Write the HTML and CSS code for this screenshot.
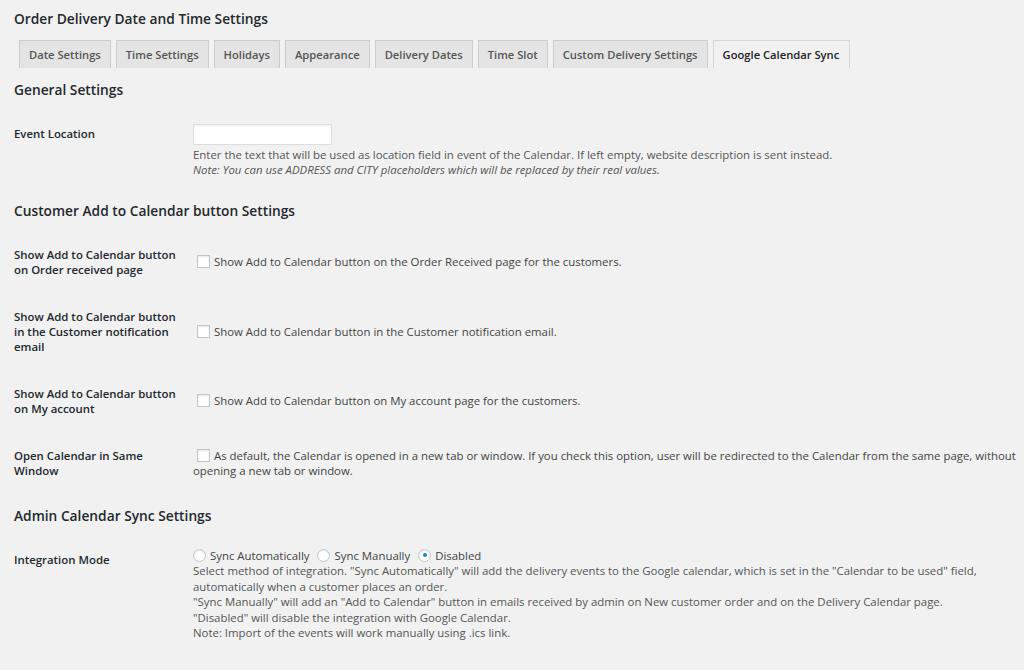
FILE: index.html
```html
<!DOCTYPE html>
<html>
<head>
<meta charset="utf-8">
<link rel="stylesheet" href="styles.css">
</head>
<body>
<h1 class="page-title">Order Delivery Date and Time Settings</h1>
<nav class="tabs">
  <a class="tab">Date Settings</a>
  <a class="tab">Time Settings</a>
  <a class="tab">Holidays</a>
  <a class="tab">Appearance</a>
  <a class="tab">Delivery Dates</a>
  <a class="tab">Time Slot</a>
  <a class="tab">Custom Delivery Settings</a>
  <a class="tab tab-active">Google Calendar Sync</a>
</nav>

<h2 class="section-title section-first">General Settings</h2>
<table class="form-table">
  <tr>
    <th>Event Location</th>
    <td>
      <input type="text" class="text-input">
      <p class="desc">Enter the text that will be used as location field in event of the Calendar. If left empty, website description is sent instead.<br><i>Note: You can use ADDRESS and CITY placeholders which will be replaced by their real values.</i></p>
    </td>
  </tr>
</table>

<h2 class="section-title">Customer Add to Calendar button Settings</h2>
<table class="form-table">
  <tr>
    <th>Show Add to Calendar button on Order received page</th>
    <td><label><input type="checkbox" class="check">Show Add to Calendar button on the Order Received page for the customers.</label></td>
  </tr>
  <tr>
    <th>Show Add to Calendar button in the Customer notification email</th>
    <td><label><input type="checkbox" class="check">Show Add to Calendar button in the Customer notification email.</label></td>
  </tr>
  <tr>
    <th>Show Add to Calendar button on My account</th>
    <td><label><input type="checkbox" class="check">Show Add to Calendar button on My account page for the customers.</label></td>
  </tr>
  <tr>
    <th>Open Calendar in Same Window</th>
    <td><label><input type="checkbox" class="check">As default, the Calendar is opened in a new tab or window. If you check this option, user will be redirected to the Calendar from the same page, without opening a new tab or window.</label></td>
  </tr>
</table>

<h2 class="section-title">Admin Calendar Sync Settings</h2>
<table class="form-table">
  <tr>
    <th>Integration Mode</th>
    <td class="mode-cell">
      <div class="radios">
        <label><input type="radio" name="mode" class="radio">Sync Automatically</label>
        <label><input type="radio" name="mode" class="radio">Sync Manually</label>
        <label><input type="radio" name="mode" class="radio" checked>Disabled</label>
      </div>
      <p class="mode-desc">Select method of integration. "Sync Automatically" will add the delivery events to the Google calendar, which is set in the "Calendar to be used" field, automatically when a customer places an order.<br>"Sync Manually" will add an "Add to Calendar" button in emails received by admin on New customer order and on the Delivery Calendar page.<br>"Disabled" will disable the integration with Google Calendar.<br>Note: Import of the events will work manually using .ics link.</p>
    </td>
  </tr>
</table>
</body>
</html>
```

FILE: styles.css
```css
html, body {
  background: #f1f1f1;
}
body {
  margin: 0;
  padding: 0 4px 0 14px;
  font-family: "Open Sans", "Liberation Sans", sans-serif;
  font-size: 11.4px;
  line-height: 15px;
  color: #444;
}
.page-title {
  margin: 0;
  padding-top: 10px;
  font-size: 13.75px;
  line-height: 17px;
  font-weight: 600;
  color: #23282d;
}
.tabs {
  display: flex;
  gap: 5px;
  margin-top: 13px;
  padding-left: 5px;
}
.tab {
  display: block;
  height: 27px;
  line-height: 27px;
  padding: 0 9px 0 9px;
  border: 1px solid #ccc;
  border-bottom: none;
  background: #e4e4e4;
  color: #555;
  font-size: 11.2px;
  font-weight: 600;
  white-space: nowrap;
}
.tab-active {
  background: #f1f1f1;
  color: #1d2125;
  border-color: #d6d6d6;
  padding-right: 10px;
}
.section-title {
  margin: 13px 0 12px;
  font-size: 13.75px;
  line-height: 17px;
  font-weight: 600;
  color: #23282d;
}
.section-first {
  margin-top: 12.5px;
}
.form-table {
  width: 100%;
  border-collapse: collapse;
}
.form-table th {
  width: 169px;
  padding: 16px 10px 16px 0;
  text-align: left;
  vertical-align: top;
  font-weight: 600;
  color: #23282d;
}
.form-table td {
  padding: 12px 0;
  vertical-align: middle;
}
.text-input {
  display: block;
  box-sizing: border-box;
  width: 139px;
  height: 21px;
  margin: 2px 0 0;
  border: 1px solid #ddd;
  background: #fff;
  box-shadow: inset 0 1px 2px rgba(0,0,0,.07);
}
.desc {
  margin: 2px 0 0;
  color: #555;
}
.check, .radio {
  -webkit-appearance: none;
  appearance: none;
  box-sizing: border-box;
  width: 13px;
  height: 13px;
  margin: 0 4px 0 4px;
  border: 1px solid #c3c7cb;
  background: #fff;
  box-shadow: inset 0 1px 2px rgba(0,0,0,.1);
  vertical-align: -2px;
}
.radio {
  border-radius: 50%;
  margin: 0 4px 0 0;
  position: relative;
}
.radio:checked::before {
  content: "";
  position: absolute;
  left: 3.5px;
  top: 3.5px;
  width: 4px;
  height: 4px;
  border-radius: 50%;
  background: #1e8cbe;
}
.radios label {
  margin-right: 5px;
}
.mode-cell {
  line-height: 15.5px;
}
.mode-desc {
  margin: 0;
  color: #555;
}
```
